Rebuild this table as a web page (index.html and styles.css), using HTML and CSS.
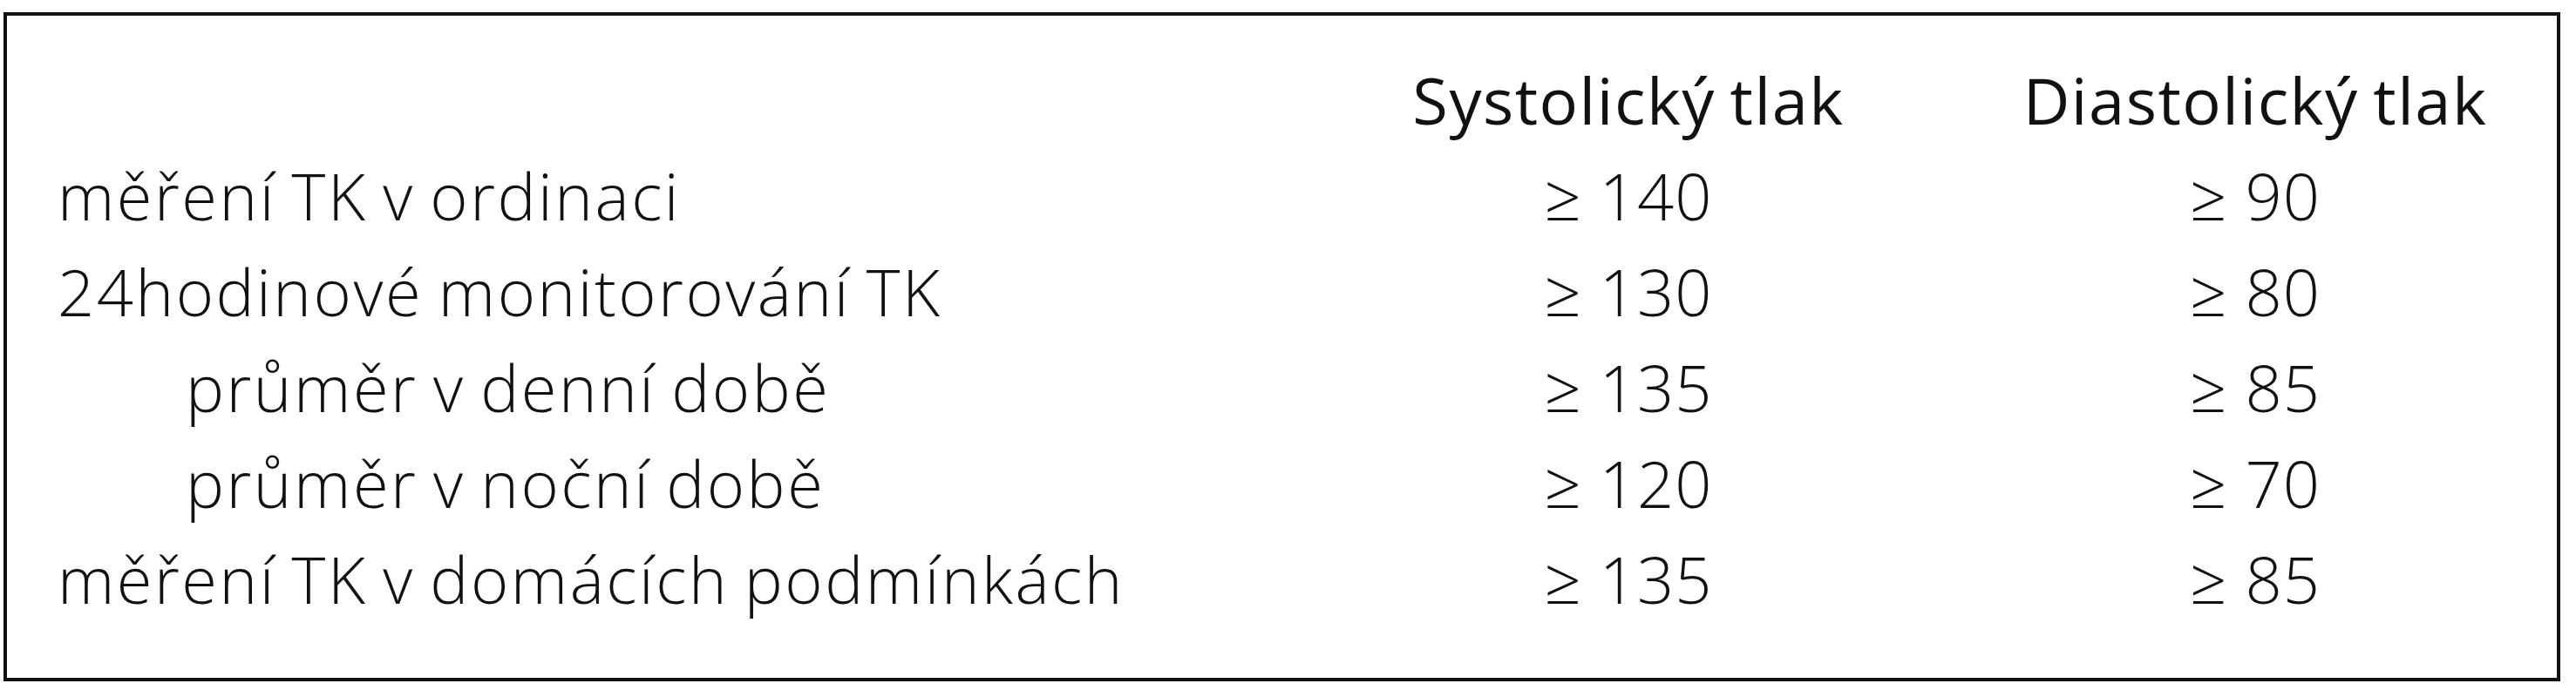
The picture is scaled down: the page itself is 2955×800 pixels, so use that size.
FILE: index.html
```html
<!DOCTYPE html>
<html lang="cs">
<head>
<meta charset="utf-8">
<title>Hodnoty TK</title>
<link rel="stylesheet" href="styles.css">
</head>
<body>
<div class="box">
  <div class="grid">
    <div class="cell label head"></div>
    <div class="cell num head">Systolický tlak</div>
    <div class="cell num head">Diastolický tlak</div>

    <div class="cell label">měření TK v ordinaci</div>
    <div class="cell num">≥ 140</div>
    <div class="cell num">≥ 90</div>

    <div class="cell label">24hodinové monitorování TK</div>
    <div class="cell num">≥ 130</div>
    <div class="cell num">≥ 80</div>

    <div class="cell label indent">průměr v denní době</div>
    <div class="cell num">≥ 135</div>
    <div class="cell num">≥ 85</div>

    <div class="cell label indent">průměr v noční době</div>
    <div class="cell num">≥ 120</div>
    <div class="cell num">≥ 70</div>

    <div class="cell label">měření TK v domácích podmínkách</div>
    <div class="cell num">≥ 135</div>
    <div class="cell num">≥ 85</div>
  </div>
</div>
</body>
</html>
```
FILE: styles.css
```css
html, body {
  margin: 0;
  padding: 0;
  background: #ffffff;
}
body {
  padding: 14px 0 0 4px;
  font-family: "Open Sans", "Liberation Sans", sans-serif;
  font-weight: 300;
  color: #111;
}
.box {
  width: 2933px;
  height: 768px;
  box-sizing: border-box;
  border: 4px solid #111;
  padding: 42px 66px 0 58px;
}
.grid {
  display: grid;
  grid-template-columns: 1fr 560px 560px;
  column-gap: 159px;
  grid-auto-rows: 110px;
  font-size: 74px;
  line-height: 110px;
}
.cell {
  white-space: nowrap;
}
.label {
  letter-spacing: 2.5px;
  word-spacing: -4px;
}
.num {
  text-align: center;
  letter-spacing: 1px;
}
.head {
  font-weight: 400;
  letter-spacing: 1.5px;
  word-spacing: -4px;
}
.indent {
  padding-left: 147px;
}
```
